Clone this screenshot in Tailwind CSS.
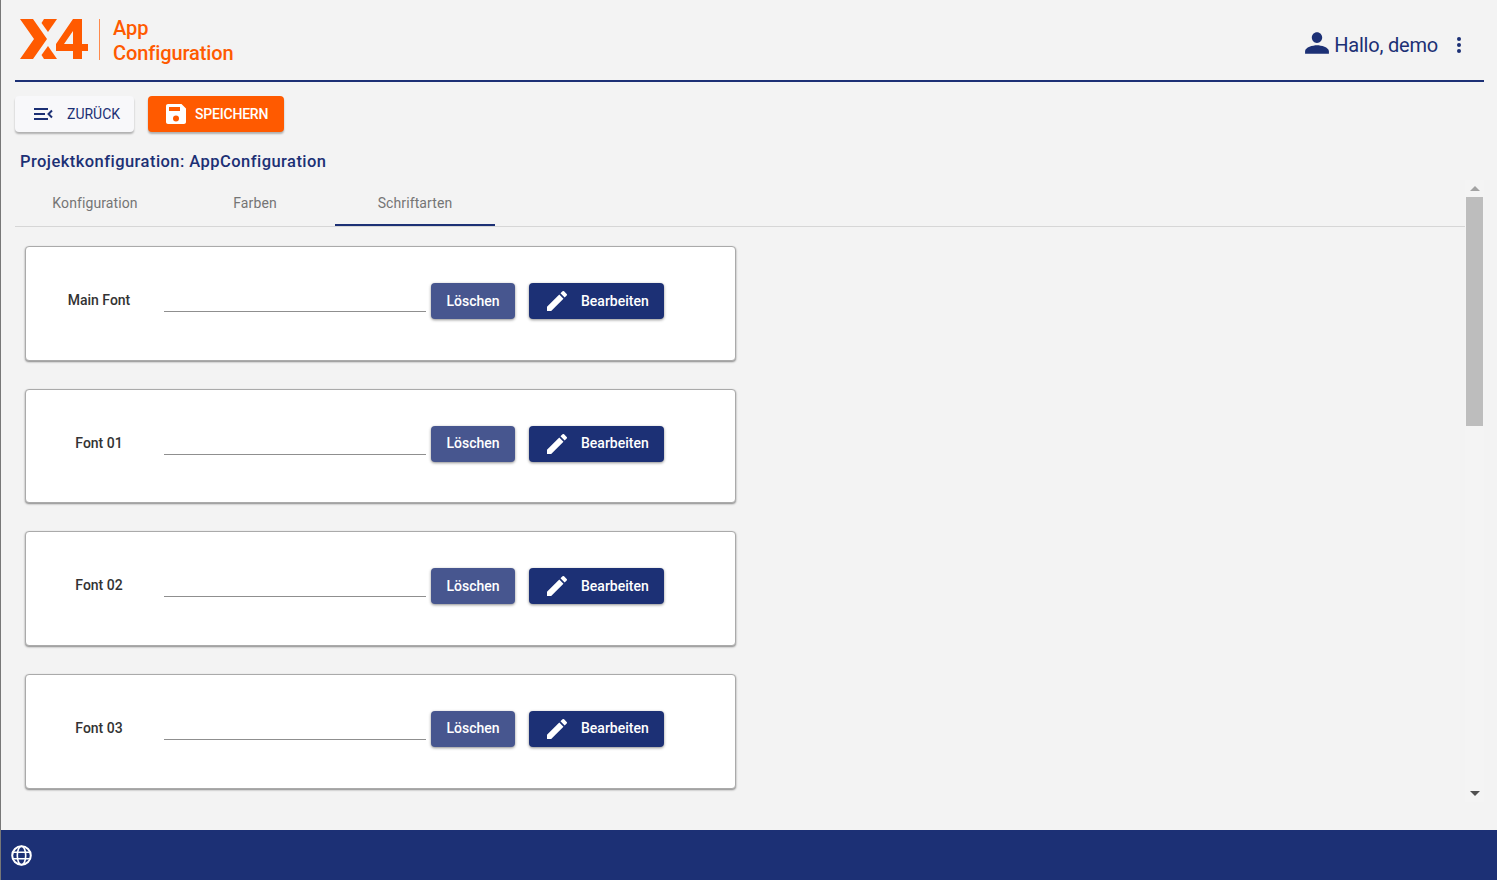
<!DOCTYPE html>
<html>
<head>
<meta charset="utf-8">
<script src="https://cdn.jsdelivr.net/npm/@tailwindcss/browser@4"></script>
</head>
<body class="m-0 overflow-hidden bg-[#f3f3f3] font-['Roboto',sans-serif]">
<div class="flex h-[880px] w-[1497px] flex-col border-l border-[#777]">
  <div class="flex min-h-0 flex-1 flex-col pl-[14px] pr-[13px]">
    <header class="flex h-[82px] shrink-0 items-start border-b-2 border-[#1c3075]">
      <div class="ml-[5px] mt-[19px] flex h-[41px] items-start">
        <svg class="block" width="69" height="41" viewBox="0 0 69 41" fill="#ff5a00">
          <polygon points="0,0 13,0 27,20 13,40 0,40 14,20"/>
          <polygon points="24,0 37,0 28,13 21.500,4"/>
          <polygon points="21.500,36 28,27 37,40 24,40"/>
          <path fill-rule="evenodd" d="M53,0 L62,0 L62,25 L68,25 L68,32 L62,32 L62,40 L53,40 L53,32 L36,32 L36,25 Z M53,12 L44,25 L53,25 Z"/>
        </svg>
        <div class="ml-[10px] h-[41px] w-px bg-[#ff8a4c]"></div>
        <div class="ml-[13px] -mt-[3px] text-[20px] leading-[24.500px] font-medium text-[#ff5a00] tracking-[-0.1px]">App<br>Configuration</div>
      </div>
      <div class="ml-auto mr-[22px] mt-[33px] flex items-center text-[#1c3075]">
        <svg width="26" height="26" viewBox="0 0 24 24" fill="currentColor" class="mr-[4px] -mt-[5px]"><path d="M12 12c2.760 0 4.800-2.240 4.800-5S14.760 2 12 2 7.200 4.240 7.200 7s2.040 5 4.800 5zm0 2c-3.800 0-11 1.900-11 5.500V22h22v-2.500c0-3.600-7.200-5.500-11-5.500z"/></svg>
        <span class="text-[20px] leading-[24px] tracking-[-0.2px]">Hallo, demo</span>
        <svg width="6" height="16" viewBox="0 0 6 16" fill="currentColor" class="ml-[18px]"><circle cx="3" cy="2" r="2"/><circle cx="3" cy="8" r="2"/><circle cx="3" cy="14" r="2"/></svg>
      </div>
    </header>
    <div class="mt-[14px] flex shrink-0 gap-[14px]">
      <button class="flex h-[36px] w-[119px] items-center rounded bg-[#f8f8fa] pl-[18px] text-[14px] text-[#1c3075] shadow-[0_2px_2px_rgba(0,0,0,0.28)]">
        <svg width="20" height="14" viewBox="0 0 20 14" fill="none" stroke="currentColor" stroke-width="2"><path d="M1 2h14M1 7h11M1 12h14M19 3.500 15.500 7 19 10.500"/></svg>
        <span class="ml-[14px] tracking-[0px]">ZURÜCK</span>
      </button>
      <button class="flex h-[36px] w-[136px] items-center rounded bg-[#ff5a00] pl-[18px] text-[14px] font-medium text-white shadow-[0_2px_2px_rgba(0,0,0,0.28)]">
        <svg width="20" height="20" viewBox="0 0 20 20" fill="currentColor"><path fill-rule="evenodd" d="M15.500 0H2C.9 0 0 .9 0 2v16c0 1.100.9 2 2 2h16c1.100 0 2-.9 2-2V4.500L15.500 0zM10 17.500a3 3 0 1 1 0-6 3 3 0 0 1 0 6zM14 7H3V3h11v4z"/></svg>
        <span class="ml-[9px] tracking-[-0.2px]">SPEICHERN</span>
      </button>
    </div>
    <h1 class="ml-[5px] mt-[20px] shrink-0 text-[16.500px] leading-[20px] font-medium tracking-[0.45px] text-[#1c3075]">Projektkonfiguration: AppConfiguration</h1>
    <div class="mt-[8px] flex min-h-0 flex-1 pb-[28px]">
      <div class="min-w-0 flex-1 overflow-hidden">
        <nav class="flex h-[47px] border-b border-[#d6d6d6] text-[14px] tracking-[0.1px] text-[#757575]">
          <div class="flex h-[46px] w-[160px] items-center justify-center">Konfiguration</div>
          <div class="flex h-[46px] w-[160px] items-center justify-center">Farben</div>
          <div class="flex h-[46px] w-[160px] items-center justify-center border-b-2 border-[#1c3075] pt-[2px]">Schriftarten</div>
        </nav>
        <div class="ml-[10px] mt-[19px] flex w-[711px] flex-col gap-[28px]">
          <section class="flex h-[114.670px] shrink-0 items-start rounded border border-[#aaa] bg-white shadow-[0_1px_2px_rgba(0,0,0,0.45)]">
            <div class="mt-[44px] w-[138px] pl-[8px] text-center text-[14px] leading-[18px] font-medium text-[#333]">Main Font</div>
            <div class="mt-[64px] h-px w-[262px] bg-[#8f8f8f]"></div>
            <button class="ml-[5px] mt-[36px] h-[36px] w-[84px] rounded bg-[#47568f] text-[14px] font-medium text-white shadow-[0_1px_3px_rgba(0,0,0,0.45)]">Löschen</button>
            <button class="ml-[14px] mt-[36px] flex h-[36px] w-[135px] items-center rounded bg-[#1c3075] pl-[18px] text-[14px] font-medium text-white shadow-[0_1px_3px_rgba(0,0,0,0.45)]">
              <svg width="20" height="20" viewBox="3 3 18 18" fill="currentColor"><path d="M3 17.250V21h3.750L17.810 9.940l-3.750-3.750L3 17.250zM20.710 7.040a1 1 0 0 0 0-1.410l-2.340-2.340a1 1 0 0 0-1.410 0l-1.830 1.830 3.750 3.750 1.830-1.830z"/></svg>
              <span class="ml-[14px]">Bearbeiten</span>
            </button>
          </section>
          <section class="flex h-[114.670px] shrink-0 items-start rounded border border-[#aaa] bg-white shadow-[0_1px_2px_rgba(0,0,0,0.45)]">
            <div class="mt-[44px] w-[138px] pl-[8px] text-center text-[14px] leading-[18px] font-medium text-[#333]">Font 01</div>
            <div class="mt-[64px] h-px w-[262px] bg-[#8f8f8f]"></div>
            <button class="ml-[5px] mt-[36px] h-[36px] w-[84px] rounded bg-[#47568f] text-[14px] font-medium text-white shadow-[0_1px_3px_rgba(0,0,0,0.45)]">Löschen</button>
            <button class="ml-[14px] mt-[36px] flex h-[36px] w-[135px] items-center rounded bg-[#1c3075] pl-[18px] text-[14px] font-medium text-white shadow-[0_1px_3px_rgba(0,0,0,0.45)]">
              <svg width="20" height="20" viewBox="3 3 18 18" fill="currentColor"><path d="M3 17.250V21h3.750L17.810 9.940l-3.750-3.750L3 17.250zM20.710 7.040a1 1 0 0 0 0-1.410l-2.340-2.340a1 1 0 0 0-1.410 0l-1.830 1.830 3.750 3.750 1.830-1.830z"/></svg>
              <span class="ml-[14px]">Bearbeiten</span>
            </button>
          </section>
          <section class="flex h-[114.670px] shrink-0 items-start rounded border border-[#aaa] bg-white shadow-[0_1px_2px_rgba(0,0,0,0.45)]">
            <div class="mt-[44px] w-[138px] pl-[8px] text-center text-[14px] leading-[18px] font-medium text-[#333]">Font 02</div>
            <div class="mt-[64px] h-px w-[262px] bg-[#8f8f8f]"></div>
            <button class="ml-[5px] mt-[36px] h-[36px] w-[84px] rounded bg-[#47568f] text-[14px] font-medium text-white shadow-[0_1px_3px_rgba(0,0,0,0.45)]">Löschen</button>
            <button class="ml-[14px] mt-[36px] flex h-[36px] w-[135px] items-center rounded bg-[#1c3075] pl-[18px] text-[14px] font-medium text-white shadow-[0_1px_3px_rgba(0,0,0,0.45)]">
              <svg width="20" height="20" viewBox="3 3 18 18" fill="currentColor"><path d="M3 17.250V21h3.750L17.810 9.940l-3.750-3.750L3 17.250zM20.710 7.040a1 1 0 0 0 0-1.410l-2.340-2.340a1 1 0 0 0-1.410 0l-1.830 1.830 3.750 3.750 1.830-1.830z"/></svg>
              <span class="ml-[14px]">Bearbeiten</span>
            </button>
          </section>
          <section class="flex h-[114.670px] shrink-0 items-start rounded border border-[#aaa] bg-white shadow-[0_1px_2px_rgba(0,0,0,0.45)]">
            <div class="mt-[44px] w-[138px] pl-[8px] text-center text-[14px] leading-[18px] font-medium text-[#333]">Font 03</div>
            <div class="mt-[64px] h-px w-[262px] bg-[#8f8f8f]"></div>
            <button class="ml-[5px] mt-[36px] h-[36px] w-[84px] rounded bg-[#47568f] text-[14px] font-medium text-white shadow-[0_1px_3px_rgba(0,0,0,0.45)]">Löschen</button>
            <button class="ml-[14px] mt-[36px] flex h-[36px] w-[135px] items-center rounded bg-[#1c3075] pl-[18px] text-[14px] font-medium text-white shadow-[0_1px_3px_rgba(0,0,0,0.45)]">
              <svg width="20" height="20" viewBox="3 3 18 18" fill="currentColor"><path d="M3 17.250V21h3.750L17.810 9.940l-3.750-3.750L3 17.250zM20.710 7.040a1 1 0 0 0 0-1.410l-2.340-2.340a1 1 0 0 0-1.410 0l-1.830 1.830 3.750 3.750 1.830-1.830z"/></svg>
              <span class="ml-[14px]">Bearbeiten</span>
            </button>
          </section>
        </div>
      </div>
      <div class="flex w-[19px] shrink-0 flex-col bg-[#f4f4f4] pl-px pr-px">
        <div class="flex h-[17px] items-center justify-center"><div class="h-0 w-0 border-x-[5px] border-b-[5px] border-x-transparent border-b-[#a3a3a3]"></div></div>
        <div class="h-[229px] bg-[#bdbdbd]"></div>
        <div class="flex-1"></div>
        <div class="flex h-[17px] items-center justify-center"><div class="h-0 w-0 border-x-[5px] border-t-[5px] border-x-transparent border-t-[#505050]"></div></div>
      </div>
    </div>
  </div>
  <footer class="flex h-[50px] shrink-0 items-center bg-[#1c3075] pl-[10px]">
    <svg width="21" height="21" viewBox="0 0 21 21" fill="none" stroke="#fff" stroke-width="2"><circle cx="10.500" cy="10.500" r="9.300"/><ellipse cx="10.500" cy="10.500" rx="4.200" ry="9.300" stroke-width="1.600"/><path d="M1.500 7.200h18M1.500 13.800h18" stroke-width="1.600"/></svg>
  </footer>
</div>
</body>
</html>
